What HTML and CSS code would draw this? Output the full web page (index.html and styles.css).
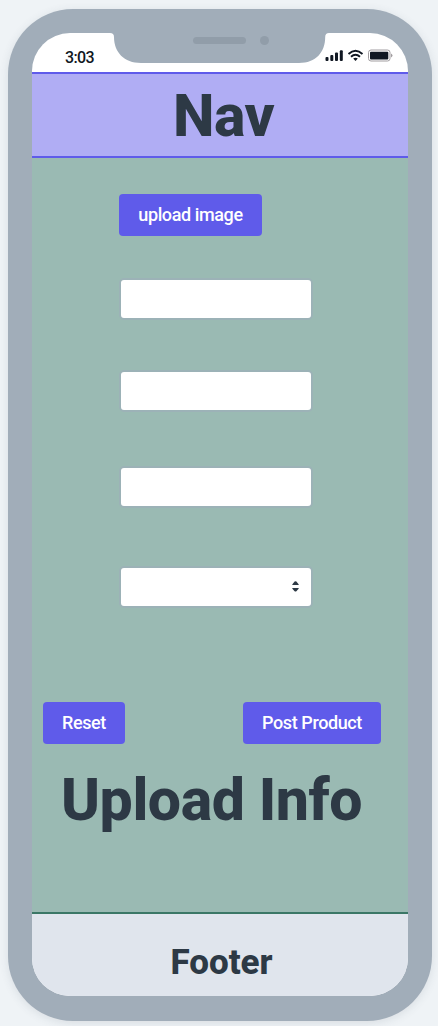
FILE: index.html
```html
<!DOCTYPE html>
<html lang="en">
<head>
<meta charset="utf-8">
<title>Upload Info</title>
<link rel="stylesheet" href="styles.css">
</head>
<body>
<div class="phone">
  <svg class="notch" width="220" height="32" viewBox="0 0 220 32">
    <path fill="#a1adb9" d="M0 0H220V2H219Q215.200 2 215.200 6C215.200 21 206 32 189 32H31C14 32 4 21 4 6Q4 2 0 2Z"/>
    <rect x="83" y="6" width="53" height="7" rx="3.5" fill="#919da9"/>
    <circle cx="154.500" cy="9.500" r="4.500" fill="#919da9"/>
  </svg>
  <div class="screen">
    <div class="status">
      <span class="time">3:03</span>
      <svg class="indicators" width="68" height="14" viewBox="0 0 68 14">
        <g fill="#101722">
          <rect x="0.500" y="8" width="3" height="4" rx="1"/>
          <rect x="5.300" y="6" width="3" height="6" rx="1"/>
          <rect x="10" y="3.500" width="3" height="8.500" rx="1"/>
          <rect x="14.800" y="1.200" width="3" height="10.800" rx="1"/>
        </g>
        <g fill="none" stroke="#101722" stroke-width="1.900">
          <path d="M23.500 5Q30.500 -1.500 37.500 5"/>
          <path d="M26 7.700Q30.500 3.700 35 7.700"/>
        </g>
        <path fill="#101722" d="M28.200 9.600Q30.500 7.800 32.800 9.600L30.500 12Z"/>
        <rect x="43.500" y="1" width="21.500" height="11" rx="2.500" fill="#fff" stroke="#a19da0"/>
        <rect x="45" y="2.700" width="18.300" height="7.700" rx="1" fill="#101722"/>
        <path fill="#a19da0" d="M66 4.500Q69 6.500 66 8.500Z"/>
      </svg>
    </div>
    <header class="nav"><h1 class="nav-title">Nav</h1></header>
    <main class="main">
      <form class="form">
        <button class="button upload" type="button"><span class="upload-label">upload image</span></button>
        <div class="fields">
          <div class="field"></div>
          <div class="field second"></div>
          <div class="field third"></div>
          <div class="field select">
            <svg width="7" height="11" viewBox="0 0 7 11"><path fill="#2d3945" d="M.5 4Q0 4 .4 3.200L2.600.6Q3.500 0 4.400.6L6.600 3.200Q7 4 6.500 4ZM.5 7Q0 7 .4 7.800L2.600 10.200Q3.500 11 4.400 10.200L6.600 7.800Q7 7 6.500 7Z"/></svg>
          </div>
        </div>
        <div class="actions">
          <button class="button reset" type="button"><span class="reset-label">Reset</span></button>
          <button class="button post" type="button"><span class="post-label">Post Product</span></button>
        </div>
      </form>
      <h2 class="title">Upload Info</h2>
    </main>
    <footer class="footer"><span class="footer-title">Footer</span></footer>
  </div>
</div>
</body>
</html>
```
FILE: styles.css
```css
* { box-sizing: border-box; }
body {
  margin: 0;
  height: 1026px;
  padding: 9px 6px 0 8px;
  overflow: hidden;
  background: #eff3f6;
  color: #2d3945;
  font-family: Roboto, "Liberation Sans", sans-serif;
}
.phone {
  position: relative;
  width: 424px;
  height: 1012px;
  padding: 24px 24px 25px;
  border-radius: 65px;
  background: #a1adb9;
  box-shadow: 0 2px 10px rgba(60, 75, 90, .12);
}
.notch {
  position: absolute;
  z-index: 1;
  left: 102px;
  top: 22px;
}
.screen {
  display: flex;
  flex-direction: column;
  width: 376px;
  height: 963px;
  overflow: hidden;
  border-radius: 38px;
  background: #fff;
}
.status {
  display: flex;
  justify-content: space-between;
  height: 39px;
  padding: 14px 15px 0 33px;
}
.time {
  font-size: 16px;
  font-weight: 500;
  line-height: 21px;
  color: #101722;
  letter-spacing: -.6px;
}
.indicators { display: block; margin-top: 2px; }
.nav {
  display: flex;
  justify-content: center;
  height: 86px;
  padding-left: 7px;
  border-top: 2px solid #5f5bea;
  border-bottom: 2px solid #5f5bea;
  background: #b0adf4;
}
.nav-title {
  margin: 0;
  font-size: 59px;
  font-weight: 800;
  letter-spacing: -.6px;
  line-height: 83px;
}
.main {
  height: 754px;
  padding: 36px 27px 0 11px;
  background: #9abab3;
}
.form { display: flex; flex-direction: column; }
.button {
  height: 42px;
  padding: 0;
  border: 0;
  border-radius: 4px;
  background: #5f5bea;
  color: #fff;
  font: 500 18px/42px Roboto, "Liberation Sans", sans-serif;
  letter-spacing: -.4px;
  white-space: nowrap;
}
.upload { width: 143px; margin-left: 76px; }
.reset { width: 82px; }
.post { width: 138px; }
.fields { margin: 42px 0 0 76px; }
.field {
  width: 194px;
  height: 42px;
  border: 2px solid #9cb2b7;
  border-radius: 5px;
  background: #fff;
}
.second { margin-top: 50px; }
.third { margin-top: 54px; }
.select {
  display: flex;
  align-items: center;
  justify-content: flex-end;
  margin-top: 58px;
  padding: 0 12px 2px 0;
}
.actions {
  display: flex;
  justify-content: space-between;
  margin-top: 94px;
}
.title {
  margin: 21px 0 0 18px;
  font-size: 59px;
  font-weight: 800;
  letter-spacing: -.45px;
  line-height: 70px;
  white-space: nowrap;
}
.footer {
  display: flex;
  justify-content: center;
  flex: 1;
  padding: 28px 0 0 3px;
  border-top: 2px solid #3b7766;
  background: #e0e5ed;
}
.footer-title {
  font-size: 35px;
  font-weight: 800;
  line-height: 42px;
}
```
